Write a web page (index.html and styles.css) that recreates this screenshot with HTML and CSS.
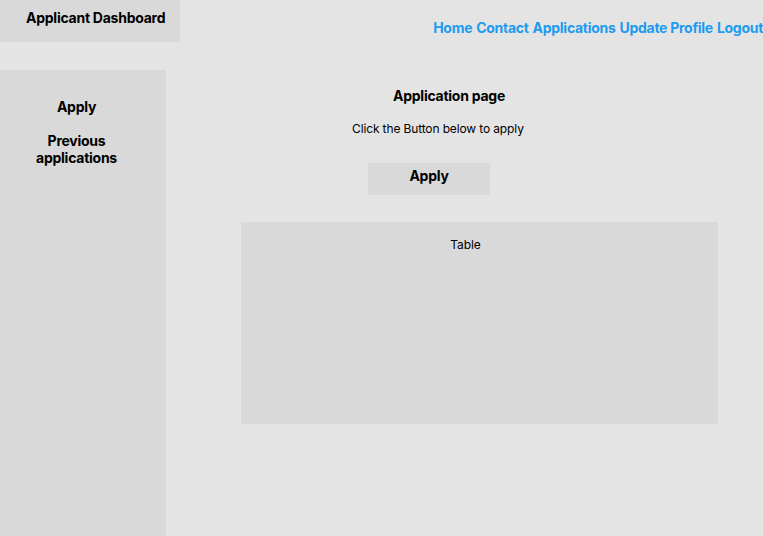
FILE: index.html
```html
<!DOCTYPE html>
<html lang="en">
<head>
<meta charset="utf-8">
<title>Applicant Dashboard</title>
<link rel="stylesheet" href="styles.css">
</head>
<body>
<div class="page">
  <header class="topbar">
    <div class="brand">Applicant Dashboard</div>
    <nav class="nav">
      <a href="#">Home</a>
      <a href="#">Contact</a>
      <a href="#">Applications</a>
      <a href="#">Update Profile</a>
      <a href="#">Logout</a>
    </nav>
  </header>
  <div class="body">
    <aside class="sidebar">
      <div class="side-item">Apply</div>
      <div class="side-item">Previous<br>applications</div>
    </aside>
    <main class="main">
      <h1 class="title">Application page</h1>
      <p class="sub">Click the Button below to apply</p>
      <button class="apply-btn">Apply</button>
      <section class="table-box">Table</section>
    </main>
  </div>
</div>
</body>
</html>
```
FILE: styles.css
```css
html, body {
  margin: 0;
  padding: 0;
}
body {
  background: #e4e4e4;
  font-family: Inter, "Noto Sans", "Liberation Sans", sans-serif;
  color: #000;
}
.page {
  width: 763px;
  height: 536px;
  overflow: hidden;
  display: flex;
  flex-direction: column;
}
.topbar {
  height: 70px;
  display: flex;
  align-items: flex-start;
  justify-content: space-between;
  flex-shrink: 0;
}
.brand {
  width: 180px;
  height: 42px;
  box-sizing: border-box;
  background: #d9d9d9;
  padding: 9px 0 0 26px;
  font-weight: 700;
  font-size: 14px;
  line-height: 17px;
  letter-spacing: -0.25px;
  white-space: nowrap;
}
.nav {
  display: flex;
  gap: 4px;
  padding-top: 19px;
  white-space: nowrap;
}
.nav a {
  color: #1d9bf0;
  text-decoration: none;
  font-weight: 700;
  font-size: 14px;
  line-height: 17px;
  letter-spacing: -0.28px;
}
.body {
  flex: 1;
  display: flex;
}
.sidebar {
  width: 166px;
  background: #d9d9d9;
  box-sizing: border-box;
  padding: 28px 13px 0 0;
  display: flex;
  flex-direction: column;
  gap: 17px;
  text-align: center;
}
.side-item {
  font-weight: 700;
  font-size: 14px;
  line-height: 17px;
  letter-spacing: -0.25px;
}
.main {
  flex: 1;
  display: flex;
  flex-direction: column;
  align-items: flex-start;
  padding-top: 17px;
}
.title {
  margin: 0 0 0 227px;
  font-size: 14px;
  font-weight: 700;
  line-height: 17px;
  letter-spacing: -0.25px;
}
.sub {
  margin: 17px 0 0 186px;
  font-size: 12px;
  line-height: 15px;
  letter-spacing: -0.13px;
}
.apply-btn {
  margin: 27px 0 0 202px;
  width: 122px;
  height: 32px;
  border: none;
  background: #d9d9d9;
  font-family: inherit;
  font-weight: 700;
  font-size: 14px;
  line-height: 17px;
  letter-spacing: -0.25px;
  padding: 4px 0 11px;
  color: #000;
}
.table-box {
  margin: 27px 0 0 75px;
  width: 477px;
  height: 202px;
  box-sizing: border-box;
  background: #d9d9d9;
  padding: 15px 28px 0 0;
  text-align: center;
  font-size: 12px;
  line-height: 15px;
  letter-spacing: -0.1px;
}
```
